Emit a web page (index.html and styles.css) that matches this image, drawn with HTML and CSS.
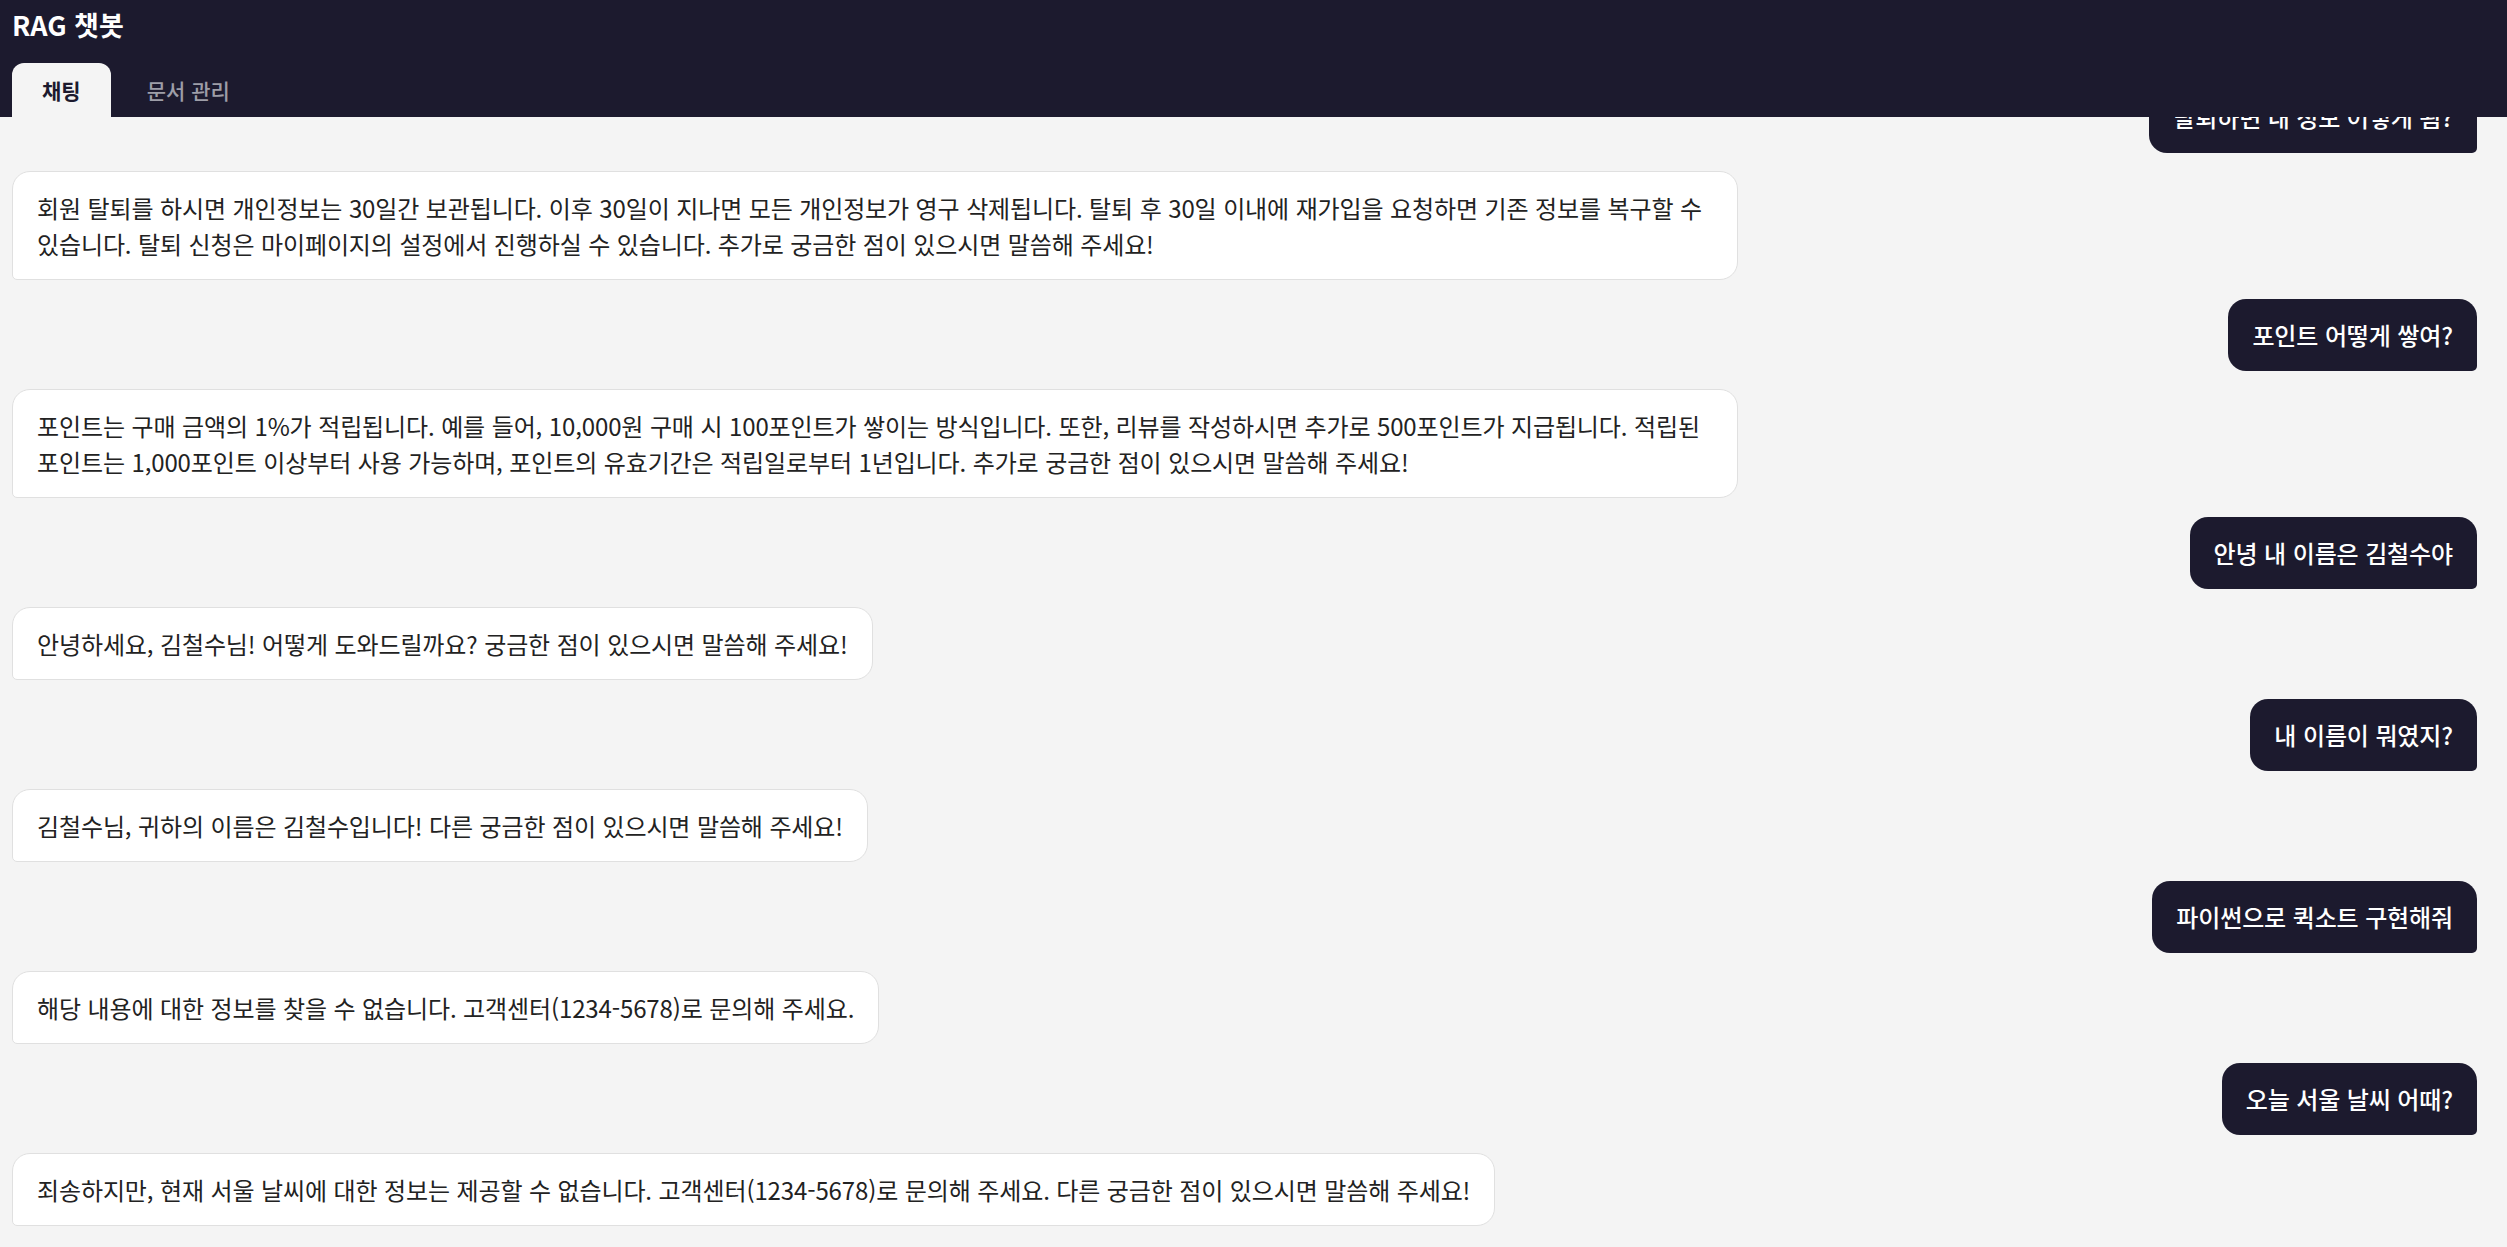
FILE: index.html
```html
<!DOCTYPE html>
<html lang="ko">
<head>
<meta charset="utf-8">
<title>RAG 챗봇</title>
<link rel="stylesheet" href="styles.css">
</head>
<body>
<div class="app">
  <header class="top">
    <h1 class="title">RAG 챗봇</h1>
    <nav class="tabs">
      <button class="tab active">채팅</button>
      <button class="tab">문서 관리</button>
    </nav>
  </header>
  <main class="chat">
    <div class="msg user"><div class="bubble">탈퇴하면 내 정보 어떻게 됨?</div></div>
    <div class="msg bot"><div class="bubble">회원 탈퇴를 하시면 개인정보는 30일간 보관됩니다. 이후 30일이 지나면 모든 개인정보가 영구 삭제됩니다. 탈퇴 후 30일 이내에 재가입을 요청하면 기존 정보를 복구할 수 있습니다. 탈퇴 신청은 마이페이지의 설정에서 진행하실 수 있습니다. 추가로 궁금한 점이 있으시면 말씀해 주세요!</div></div>
    <div class="msg user"><div class="bubble">포인트 어떻게 쌓여?</div></div>
    <div class="msg bot"><div class="bubble">포인트는 구매 금액의 1%가 적립됩니다. 예를 들어, 10,000원 구매 시 100포인트가 쌓이는 방식입니다. 또한, 리뷰를 작성하시면 추가로 500포인트가 지급됩니다. 적립된 포인트는 1,000포인트 이상부터 사용 가능하며, 포인트의 유효기간은 적립일로부터 1년입니다. 추가로 궁금한 점이 있으시면 말씀해 주세요!</div></div>
    <div class="msg user"><div class="bubble">안녕 내 이름은 김철수야</div></div>
    <div class="msg bot"><div class="bubble">안녕하세요, 김철수님! 어떻게 도와드릴까요? 궁금한 점이 있으시면 말씀해 주세요!</div></div>
    <div class="msg user"><div class="bubble">내 이름이 뭐였지?</div></div>
    <div class="msg bot"><div class="bubble">김철수님, 귀하의 이름은 김철수입니다! 다른 궁금한 점이 있으시면 말씀해 주세요!</div></div>
    <div class="msg user"><div class="bubble">파이썬으로 퀵소트 구현해줘</div></div>
    <div class="msg bot"><div class="bubble">해당 내용에 대한 정보를 찾을 수 없습니다. 고객센터(1234-5678)로 문의해 주세요.</div></div>
    <div class="msg user"><div class="bubble">오늘 서울 날씨 어때?</div></div>
    <div class="msg bot"><div class="bubble">죄송하지만, 현재 서울 날씨에 대한 정보는 제공할 수 없습니다. 고객센터(1234-5678)로 문의해 주세요. 다른 궁금한 점이 있으시면 말씀해 주세요!</div></div>
  </main>
</div>
</body>
</html>
```
FILE: styles.css
```css
* { box-sizing: border-box; }
html, body {
  margin: 0;
  padding: 0;
  height: 100%;
}
body {
  font-family: "Noto Sans CJK KR", "Noto Sans", sans-serif;
  background: #f4f4f4;
  color: #222;
}
.app {
  height: 100vh;
  display: flex;
  flex-direction: column;
}
.top {
  background: #1c1a2e;
  padding: 7px 12px 0;
  flex: 0 0 auto;
}
.title {
  margin: 0 0 20px;
  font-size: 27px;
  line-height: 36px;
  font-weight: 700;
  color: #fff;
}
.tabs {
  display: flex;
  gap: 6px;
}
.tab {
  font-family: inherit;
  font-size: 21px;
  line-height: 30px;
  padding: 12px 30px;
  border: none;
  background: transparent;
  color: #9e9ea8;
  font-weight: 500;
  border-radius: 12px 12px 0 0;
}
.tab.active {
  background: #f4f4f4;
  color: #1c1a2e;
  font-weight: 700;
}
.chat {
  flex: 1 1 auto;
  min-height: 0;
  overflow: hidden;
  display: flex;
  flex-direction: column;
  justify-content: flex-end;
  gap: 18.5px;
  padding: 0 30px 21px 12px;
}
.msg {
  display: flex;
  max-width: 70%;
}
.msg.user { align-self: flex-end; }
.msg.bot { align-self: flex-start; }
.bubble {
  font-size: 24px;
  line-height: 36px;
  letter-spacing: -0.12px;
}
.user .bubble {
  background: #1c1a2e;
  color: #fff;
  font-weight: 500;
  padding: 18px 24px;
  border-radius: 18px 18px 5px 18px;
}
.bot .bubble {
  background: #fff;
  border: 1px solid #e0e0e0;
  padding: 17.5px 24px;
  border-radius: 18px 18px 18px 5px;
}
```
